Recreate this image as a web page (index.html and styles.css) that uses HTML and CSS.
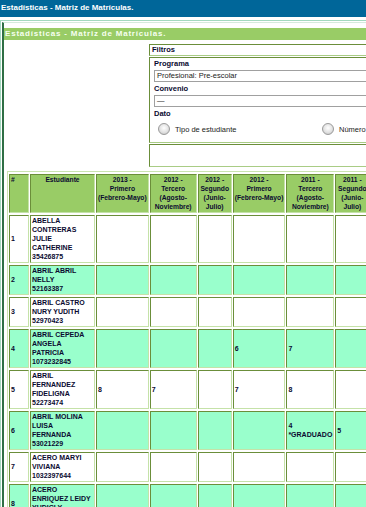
FILE: index.html
```html
<!DOCTYPE html>
<html lang="es">
<head>
    <meta charset="UTF-8">
    <title>Estadísticas - Matriz de Matrículas.</title>
    <link rel="stylesheet" href="styles.css">
</head>
<body>
<div class="topbar">Estadísticas - Matriz de Matrículas.</div>
<div class="frame">
    <div class="inner">
        <div class="title">Estadísticas - Matriz de Matrículas.</div>

        <!-- filtros -->
        <div class="filtros">
            <div class="fbox fhead">Filtros</div>
            <div class="fbox fbody">
                <div class="lbl">Programa</div>
                <div class="sel">Profesional: Pre-escolar</div>
                <div class="lbl">Convenio</div>
                <div class="sel">&mdash;</div>
                <div class="lbl">Dato</div>
                <div class="radios">
                    <label class="radio"><span class="dot"></span>Tipo de estudiante</label>
                    <label class="radio"><span class="dot"></span>Número de matrículas</label>
                </div>
            </div>
            <div class="fbox fempty"></div>
        </div>

        <!-- matriz -->
        <table class="matriz">
            <tr>
                <th class="c-num num">#</th>
                <th class="c-est">Estudiante</th>
                <th class="c-p">2013 -<br>Primero<br>(Febrero-Mayo)</th>
                <th class="c-t">2012 -<br>Tercero<br>(Agosto-<br>Noviembre)</th>
                <th class="c-s">2012 -<br>Segundo<br>(Junio-<br>Julio)</th>
                <th class="c-p">2012 -<br>Primero<br>(Febrero-Mayo)</th>
                <th class="c-t">2011 -<br>Tercero<br>(Agosto-<br>Noviembre)</th>
                <th class="c-s">2011 -<br>Segundo<br>(Junio-<br>Julio)</th>
                <th class="c-p">2011 -<br>Primero<br>(Febrero-Mayo)</th>
                <th class="c-t">2010 -<br>Tercero<br>(Agosto-<br>Noviembre)</th>
            </tr>
            <tr>
                <td>1</td>
                <td>ABELLA<br>CONTRERAS<br>JULIE<br>CATHERINE<br>35426875</td>
                <td></td><td></td><td></td><td></td><td></td><td></td><td></td><td></td>
            </tr>
            <tr class="par">
                <td>2</td>
                <td>ABRIL ABRIL<br>NELLY<br>52163387</td>
                <td></td><td></td><td></td><td></td><td></td><td></td><td></td><td></td>
            </tr>
            <tr>
                <td>3</td>
                <td>ABRIL CASTRO<br>NURY YUDITH<br>52970423</td>
                <td></td><td></td><td></td><td></td><td></td><td></td><td></td><td></td>
            </tr>
            <tr class="par">
                <td>4</td>
                <td>ABRIL CEPEDA<br>ANGELA<br>PATRICIA<br>1073232845</td>
                <td></td><td></td><td></td><td>6</td><td>7</td><td></td><td></td><td></td>
            </tr>
            <tr>
                <td>5</td>
                <td>ABRIL<br>FERNANDEZ<br>FIDELIGNA<br>52273474</td>
                <td>8</td><td>7</td><td></td><td>7</td><td>8</td><td></td><td></td><td></td>
            </tr>
            <tr class="par">
                <td>6</td>
                <td>ABRIL MOLINA<br>LUISA<br>FERNANDA<br>53021229</td>
                <td></td><td></td><td></td><td></td><td>4<br>*GRADUADO</td><td>5</td><td></td><td></td>
            </tr>
            <tr>
                <td>7</td>
                <td>ACERO MARYI<br>VIVIANA<br>1032397644</td>
                <td></td><td></td><td></td><td></td><td></td><td></td><td></td><td></td>
            </tr>
            <tr class="par">
                <td>8</td>
                <td>ACERO<br>ENRIQUEZ LEIDY<br>YUDICLY<br>52835141</td>
                <td></td><td></td><td></td><td></td><td></td><td></td><td></td><td></td>
            </tr>
        </table>
    </div>
</div>
</body>
</html>
```

FILE: styles.css
```css
html {
    overflow: hidden;
}

body {
    margin: 0;
    font-family: "Liberation Sans", Arial, sans-serif;
    color: #0a0a30;
    background: #fff;
}

.topbar {
    height: 17px;
    line-height: 16px;
    padding-left: 1px;
    background: #006699;
    color: #fff;
    font-size: 8px;
    font-weight: bold;
}

.frame {
    margin-top: 3px;
    padding: 1px 0 0 1px;
    border-top: 1px solid #a3d9bf;
    border-left: 1px solid #a3d9bf;
}

.inner {
    border-top: 1px solid #d5ebdd;
    border-left: 2px solid #2f6f45;
    padding-bottom: 10px;
}

.title {
    margin-top: 5px;
    height: 12px;
    line-height: 12px;
    padding-left: 1px;
    background: #99cc66;
    color: #f6fff0;
    font-size: 8px;
    font-weight: bold;
    letter-spacing: 0.8px;
}

/* filtros */
.filtros {
    display: flex;
    flex-direction: column;
    gap: 1px;
    width: 520px;
    margin: 4px 0 0 145px;
}

.fbox {
    box-sizing: border-box;
    border: 1px solid;
    border-color: #6b8e3a #a9cc85 #a9cc85 #6b8e3a;
}

.fhead {
    height: 12px;
    line-height: 10px;
    padding-left: 2px;
    font-size: 7.5px;
    font-weight: bold;
}

.fbody {
    padding: 1px 4px 6px;
}

.lbl {
    margin-top: 2px;
    line-height: 9px;
    font-size: 7.5px;
    font-weight: bold;
}

.lbl:first-child {
    margin-top: 0;
}

.sel {
    height: 12px;
    margin-top: 2px;
    padding-left: 2px;
    border: 1px solid #a0a0a0;
    box-sizing: border-box;
    line-height: 10px;
    font-size: 7.5px;
    color: #222;
}

.radios {
    display: grid;
    grid-template-columns: repeat(3, 164px);
    margin-top: 4px;
}

.radio {
    display: flex;
    align-items: center;
    gap: 5px;
    height: 14px;
    padding-left: 4px;
    font-size: 7.5px;
    color: #222;
}

.dot {
    width: 12px;
    height: 12px;
    box-sizing: border-box;
    border: 1px solid #9a9a9a;
    border-radius: 50%;
    background: radial-gradient(circle at 50% 40%, #fff 0, #e2e2e2 55%, #bdbdbd 100%);
}

.fempty {
    height: 23px;
}

/* matriz */
.matriz {
    width: max-content;
    margin: 4px 0 0 3px;
    border: 1px solid #c9e4b0;
    border-spacing: 1px 2px;
    font-size: 7px;
    line-height: 9px;
}

.matriz th,
.matriz td {
    box-sizing: border-box;
    padding: 0 1px 1px;
    border: 1px solid;
    border-color: #6b8e3a #c5e2a8 #c5e2a8 #6b8e3a;
    white-space: nowrap;
}

.matriz th {
    background: #99cc66;
    font-size: 6.7px;
    font-weight: bold;
    text-align: center;
    vertical-align: top;
}

.matriz th.num {
    text-align: left;
}

.matriz td {
    vertical-align: middle;
    text-align: left;
    font-weight: bold;
}

.matriz tr.par td {
    background: #99ffcc;
}

.c-num { width: 20px; }
.c-est { width: 65px; }
.c-p { width: 51px; }
.c-t { width: 47px; }
.c-s { width: 34px; }
```
